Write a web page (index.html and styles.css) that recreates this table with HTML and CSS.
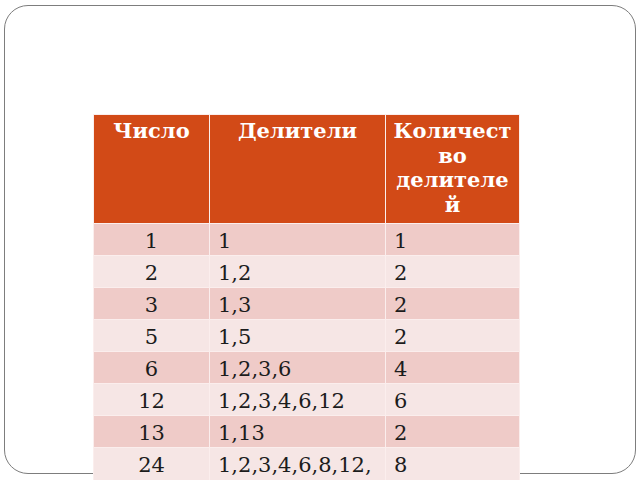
FILE: index.html
```html
<!DOCTYPE html>
<html lang="ru">
<head>
<meta charset="utf-8">
<link rel="stylesheet" href="styles.css">
</head>
<body>
<div class="slide">
  <table class="divisors">
    <colgroup>
      <col class="c-num">
      <col class="c-div">
      <col class="c-cnt">
    </colgroup>
    <thead>
      <tr>
        <th>Число</th>
        <th>Делители</th>
        <th>Количество делителей</th>
      </tr>
    </thead>
    <tbody>
      <tr><td class="num">1</td><td>1</td><td>1</td></tr>
      <tr><td class="num">2</td><td>1,2</td><td>2</td></tr>
      <tr><td class="num">3</td><td>1,3</td><td>2</td></tr>
      <tr><td class="num">5</td><td>1,5</td><td>2</td></tr>
      <tr><td class="num">6</td><td>1,2,3,6</td><td>4</td></tr>
      <tr><td class="num">12</td><td>1,2,3,4,6,12</td><td>6</td></tr>
      <tr><td class="num">13</td><td>1,13</td><td>2</td></tr>
      <tr><td class="num">24</td><td>1,2,3,4,6,8,12,<wbr>24</td><td>8</td></tr>
    </tbody>
  </table>
</div>
</body>
</html>
```
FILE: styles.css
```css
html, body {
  margin: 0;
  padding: 0;
  background: #fff;
  overflow: hidden;
}
body {
  width: 640px;
  height: 480px;
  font-family: "DejaVu Serif", serif;
}
.slide {
  box-sizing: border-box;
  margin: 5px 0 0 4px;
  width: 632px;
  height: 469px;
  border: 1.5px solid #7d7d7d;
  border-radius: 24px;
  padding: 108px 0 0 88px;
}
.divisors {
  border-collapse: collapse;
  table-layout: fixed;
  width: 426px;
}
.c-num { width: 116px; }
.c-div { width: 176px; }
.c-cnt { width: 134px; }
.divisors th,
.divisors td {
  border: 1px solid #fbeeed;
  vertical-align: top;
}
.divisors th {
  background: #d24a17;
  color: #fff;
  font-weight: bold;
  font-size: 21px;
  line-height: 24.5px;
  padding: 4px 6px 6px;
  text-align: center;
  overflow-wrap: anywhere;
}
.divisors td {
  font-size: 21px;
  line-height: 24px;
  padding: 5px 8px 2px;
  color: #1c1c1c;
  text-align: left;
}
.divisors td.num {
  text-align: center;
}
.divisors tbody tr:nth-child(odd) td {
  background: #efcbc8;
}
.divisors tbody tr:nth-child(even) td {
  background: #f6e6e5;
}
```
